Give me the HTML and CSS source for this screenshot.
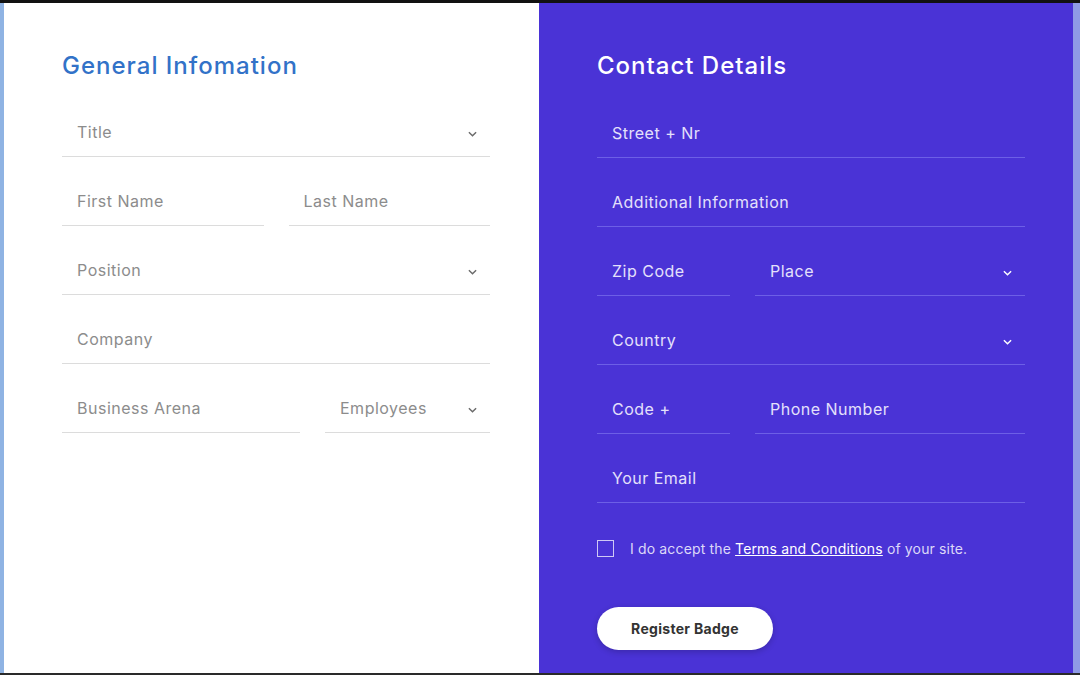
FILE: index.html
```html
<!DOCTYPE html>
<html>
<head>
<meta charset="utf-8">
<link rel="stylesheet" href="styles.css">
</head>
<body>
<div class="frame">
  <div class="edge edge-left"></div>
  <section class="panel panel-left">
    <h2 class="heading heading-blue">General Infomation</h2>
    <div class="fields">
      <div class="row"><div class="field select"><span>Title</span><svg class="chev" viewBox="0 0 10 6"><path d="M1 1l4 4 4-4"/></svg></div></div>
      <div class="row"><div class="field"><span>First Name</span></div><div class="field"><span>Last Name</span></div></div>
      <div class="row"><div class="field select"><span>Position</span><svg class="chev" viewBox="0 0 10 6"><path d="M1 1l4 4 4-4"/></svg></div></div>
      <div class="row"><div class="field"><span>Company</span></div></div>
      <div class="row row-emp"><div class="field"><span>Business Arena</span></div><div class="field select"><span>Employees</span><svg class="chev" viewBox="0 0 10 6"><path d="M1 1l4 4 4-4"/></svg></div></div>
    </div>
  </section>
  <section class="panel panel-right">
    <h2 class="heading heading-white">Contact Details</h2>
    <div class="fields">
      <div class="row"><div class="field"><span>Street + Nr</span></div></div>
      <div class="row"><div class="field"><span>Additional Information</span></div></div>
      <div class="row row-split"><div class="field"><span>Zip Code</span></div><div class="field select"><span>Place</span><svg class="chev" viewBox="0 0 10 6"><path d="M1 1l4 4 4-4"/></svg></div></div>
      <div class="row"><div class="field select"><span>Country</span><svg class="chev" viewBox="0 0 10 6"><path d="M1 1l4 4 4-4"/></svg></div></div>
      <div class="row row-split"><div class="field"><span>Code +</span></div><div class="field"><span>Phone Number</span></div></div>
      <div class="row"><div class="field"><span>Your Email</span></div></div>
    </div>
    <label class="terms"><span class="box"></span><span>I do accept the <a class="link">Terms and Conditions</a> of your site.</span></label>
    <button class="btn">Register Badge</button>
  </section>
  <div class="edge edge-right"></div>
</div>
</body>
</html>
```
FILE: styles.css
```css
* { box-sizing: border-box; }
html, body { margin: 0; padding: 0; }
body {
  width: 1080px;
  height: 675px;
  overflow: hidden;
  background: #141414;
  font-family: Inter, "Noto Sans", sans-serif;
}
.frame {
  display: flex;
  height: 675px;
  border-top: 3px solid #111;
  border-bottom: 2px solid #2a2a2a;
}
.edge-left { width: 4px; background: #8fb3e3; }
.edge-right { width: 7px; background: #8f9be6; }
.panel { padding: 48px 0 0 58px; }
.panel-left { width: 535px; background: #fff; }
.panel-right { flex: 1; background: #4a33d6; }
.heading {
  margin: 0;
  font-size: 24px;
  line-height: 30px;
  font-weight: 500;
  letter-spacing: 1px;
}
.heading-blue { color: #3272c8; }
.heading-white { color: #fff; }
.fields {
  width: 428px;
  margin-top: 29px;
  display: flex;
  flex-direction: column;
  gap: 22px;
}
.row { display: flex; gap: 25px; }
.field {
  flex: 1;
  height: 47px;
  display: flex;
  align-items: center;
  padding: 0 15px;
  font-size: 16px;
  letter-spacing: 0.5px;
  border-bottom: 1px solid #dcdcdc;
  color: #8c8c8c;
  padding-bottom: 2px;
}
.field.select { justify-content: space-between; }
.chev {
  width: 9px;
  height: 6px;
  fill: none;
  stroke: #6a6a6a;
  stroke-width: 1.6;
  margin-right: -2px;
  margin-top: 4px;
}
.row-emp .field:first-child { flex: 0 0 238px; }
.panel-right .fields { margin-top: 30px; }
.panel-right .field {
  color: #e4e0fb;
  border-bottom-color: #6d5fe6;
}
.panel-right .chev { stroke: #fff; margin-right: -2px; }
.row-split .field:first-child { flex: 0 0 133px; }
.terms {
  display: flex;
  align-items: center;
  gap: 16px;
  margin-top: 37px;
  color: #dcd8f8;
  font-size: 14px;
  letter-spacing: 0.15px;
}
.box {
  width: 17px;
  height: 17px;
  border: 1.5px solid #cfc9f5;
}
.link { color: #fff; text-decoration: underline; }
.btn {
  margin-top: 50px;
  width: 176px;
  height: 43px;
  border: 0;
  border-radius: 22px;
  background: #fff;
  color: #333;
  font-family: Inter, "Noto Sans", sans-serif;
  font-weight: 700;
  font-size: 14px;
  letter-spacing: 0.3px;
  box-shadow: 0 2px 6px rgba(0,0,0,0.2);
}
```
